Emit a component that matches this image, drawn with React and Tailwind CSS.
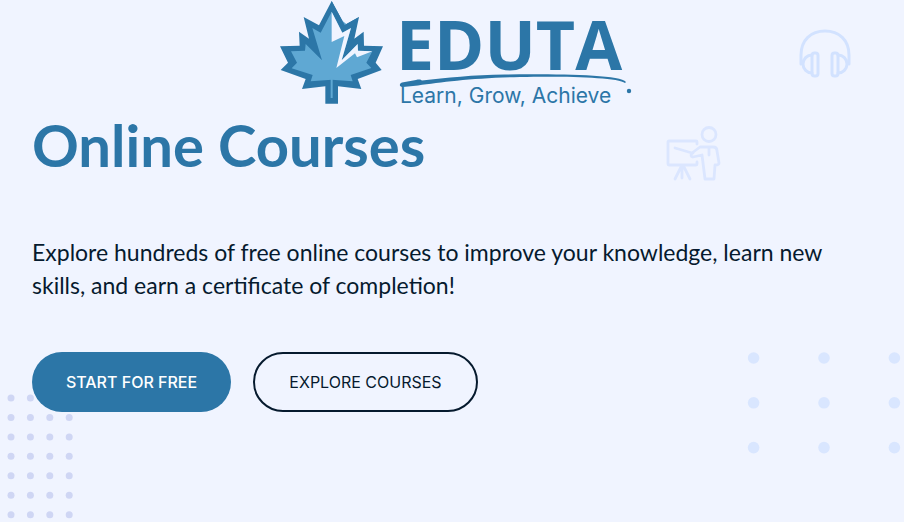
const LEFT_ROWS = [0, 1, 2, 3, 4, 5, 6];
const LEFT_COLS = [0, 1, 2, 3];
const RIGHT_ROWS = [0, 1, 2];
const RIGHT_COLS = [0, 1, 2];

function Leaf() {
  return (
    <svg aria-hidden="true" className="size-[104px] shrink-0" viewBox="29 0 312 312">
      <path
        fill="#2c76a7"
        d="M184 3 223 75 266 51 252 116 280 95 281 137 338 139 316 188 334 210 262 237 273 267 203 259V311H165V259L95 267 106 237 31 210 53 188 29 139 88 137 86 95 116 116 100 51 146 76Z"
      />
      <path
        fill="#5fa8d3"
        d="M184 35 242 84 214 181 262 132 263 152 306 154 288 188 303 204 241 225 247 244 184 239 121 244 127 225 64 205 80 188 62 154 104 152 106 132 155 181 126 84 151 98Z"
      />
      <path fill="#5fa8d3" d="M181 236H187V294H181Z" />
      <path fill="#2c76a7" d="M184 3 223 75 266 51 242 84 216 98 184 35Z" />
      <path
        fill="#f0f4ff"
        d="M184 35 216 98 242 84 214 181 262 132 263 152 306 154 260 172 254 160 198 204 222 108 184 126Z"
      />
    </svg>
  );
}

function Swoosh() {
  return (
    <svg aria-hidden="true" className="-mb-[6px] -mt-[14px] h-5 w-[236px]" viewBox="0 0 236 20" fill="#2c76a7">
      <path d="M6 8.500 20 6C24 5 25 6 26 6.500C50 4 77 0.800 109 0.500C160 0 224 0.500 230 8L229 9C222 3 164 2 124 3C78 4 46 8 22 11.500L7 13C3 13.500 3 9.500 6 8.500Z" />
      <circle cx="233" cy="17" r="2.2" />
    </svg>
  );
}

function Logo() {
  return (
    <div className="flex gap-3 text-[#2c76a7]">
      <Leaf />
      <div className="flex w-[236px] flex-col">
        <span className="font-['Open_Sans',sans-serif] text-[68px] font-bold leading-[88px]">EDUTA</span>
        <Swoosh />
        <span className="whitespace-nowrap pl-1 font-[Inter,sans-serif] text-[21px] leading-4">
          Learn, Grow, Achieve
        </span>
      </div>
    </div>
  );
}

function Headphones() {
  return (
    <svg
      aria-hidden="true"
      className="absolute right-[53px] top-[29px]"
      width="52"
      height="49"
      viewBox="0 0 52 49"
      fill="none"
      stroke="#d2e2ff"
      strokeWidth="3"
      strokeLinecap="round"
    >
      <path d="M2 35V26C2 11 12 2 26 2S50 11 50 26V35" />
      <path d="M13 26C8 26 4 30 4 35S8 44 13 44M39 26C44 26 48 30 48 35S44 44 39 44" />
      <rect x="13" y="24" width="6" height="23" rx="2.5" />
      <rect x="33" y="24" width="6" height="23" rx="2.5" />
    </svg>
  );
}

function Teacher() {
  return (
    <svg
      aria-hidden="true"
      className="absolute right-[183px] top-[125px]"
      width="55"
      height="57"
      viewBox="0 0 55 57"
      fill="none"
      stroke="#dbe6ff"
      strokeWidth="2.8"
      strokeLinecap="round"
      strokeLinejoin="round"
    >
      <circle cx="43" cy="9.500" r="7" />
      <path d="M31 19V17Q31 16 30 16H3Q2 16 2 17V39Q2 40 3 40H30Q31 40 31 39V37" />
      <path d="M9 54 15 42M16 41V53M18 42 24 54" />
      <path d="M9 23 26 28 34 22H47C50 22 51 24 51 26L53 38C53 40 51 40 49 40L48 54H39L36 30 27 32C24 32 25 28 27 28M43 24V30" />
    </svg>
  );
}

function LeftDots() {
  return (
    <svg aria-hidden="true" className="absolute left-[7px] top-[394px]" width="67" height="125" fill="#cfd6f4">
      {LEFT_ROWS.map((row) =>
        LEFT_COLS.map((col) => <circle key={`${row}-${col}`} cx={4 + col * 19.4} cy={4 + row * 19.45} r="3.5" />),
      )}
    </svg>
  );
}

function RightDots() {
  return (
    <svg aria-hidden="true" className="absolute right-[3px] top-[352px]" width="154" height="102" fill="#d9e6ff">
      {RIGHT_ROWS.map((row) =>
        RIGHT_COLS.map((col) => <circle key={`${row}-${col}`} cx={6.600 + col * 70.4} cy={6 + row * 44.8} r="5.8" />),
      )}
    </svg>
  );
}

export default function App() {
  return (
    <div className="relative min-h-screen overflow-hidden bg-[#f0f4ff] font-[Lato,sans-serif] text-[#061a2e]">
      <Headphones />
      <Teacher />
      <LeftDots />
      <RightDots />
      <header className="flex h-28 justify-center pl-2">
        <Logo />
      </header>
      <main className="relative px-8">
        <h1 className="text-[58px] font-bold leading-[66px] text-[#2c76a7]">Online Courses</h1>
        <p className="mt-[58px] text-[23px] leading-[33px]">
          Explore hundreds of free online courses to improve your knowledge, learn new skills, and earn a certificate of
          completion!
        </p>
        <div className="mt-[50px] flex flex-wrap gap-[22px] font-[Inter,sans-serif] text-base">
          <button type="button" className="h-[60px] w-[199px] rounded-full bg-[#2c76a7] font-medium text-white">
            START FOR FREE
          </button>
          <button type="button" className="h-[60px] w-[225px] rounded-full border-2 border-[#061a2e]">
            EXPLORE COURSES
          </button>
        </div>
      </main>
    </div>
  );
}
